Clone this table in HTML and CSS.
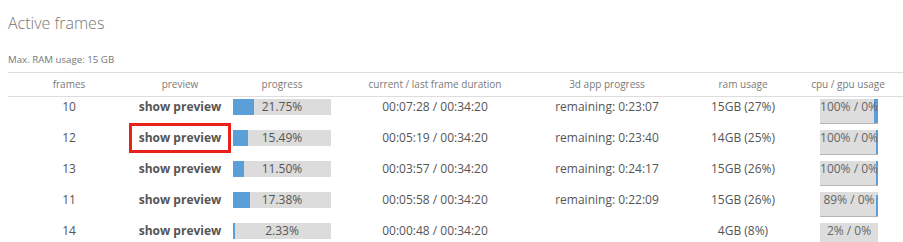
FILE: index.html
```html
<!DOCTYPE html>
<html>
<head>
<meta charset="utf-8">
<link rel="stylesheet" href="styles.css">
</head>
<body>
<div class="page">
  <h1 class="title">Active frames</h1>
  <div class="ram-note">Max. RAM usage: 15 GB</div>
  <div class="table">
    <div class="row head">
      <div class="cell">frames</div>
      <div class="cell">preview</div>
      <div class="cell">progress</div>
      <div class="cell">current / last frame duration</div>
      <div class="cell">3d app progress</div>
      <div class="cell">ram usage</div>
      <div class="cell">cpu / gpu usage</div>
      <div class="cell"></div>
    </div>

    <div class="row">
      <div class="cell">10</div>
      <div class="cell"><span class="preview">show preview</span></div>
      <div class="cell"><div class="bar"><div class="fill" style="width:21.75%"></div><span class="bar-text">21.75%</span></div></div>
      <div class="cell">00:07:28 / 00:34:20</div>
      <div class="cell">remaining: 0:23:07</div>
      <div class="cell">15GB (27%)</div>
      <div class="cell"><div class="cpu"><span class="cpu-text">100% / 0%</span><div class="gpu" style="width:4px;height:100%"></div></div></div>
      <div class="cell"></div>
    </div>

    <div class="row">
      <div class="cell">12</div>
      <div class="cell"><span class="preview marked">show preview</span></div>
      <div class="cell"><div class="bar"><div class="fill" style="width:15.49%"></div><span class="bar-text">15.49%</span></div></div>
      <div class="cell">00:05:19 / 00:34:20</div>
      <div class="cell">remaining: 0:23:40</div>
      <div class="cell">14GB (25%)</div>
      <div class="cell"><div class="cpu"><span class="cpu-text">100% / 0%</span><div class="gpu" style="width:2px;height:100%"></div></div></div>
      <div class="cell"></div>
    </div>

    <div class="row">
      <div class="cell">13</div>
      <div class="cell"><span class="preview">show preview</span></div>
      <div class="cell"><div class="bar"><div class="fill" style="width:11.5%"></div><span class="bar-text">11.50%</span></div></div>
      <div class="cell">00:03:57 / 00:34:20</div>
      <div class="cell">remaining: 0:24:17</div>
      <div class="cell">15GB (26%)</div>
      <div class="cell"><div class="cpu"><span class="cpu-text">100% / 0%</span><div class="gpu" style="width:2px;height:100%"></div></div></div>
      <div class="cell"></div>
    </div>

    <div class="row">
      <div class="cell">11</div>
      <div class="cell"><span class="preview">show preview</span></div>
      <div class="cell"><div class="bar"><div class="fill" style="width:17.38%"></div><span class="bar-text">17.38%</span></div></div>
      <div class="cell">00:05:58 / 00:34:20</div>
      <div class="cell">remaining: 0:22:09</div>
      <div class="cell">15GB (26%)</div>
      <div class="cell"><div class="cpu"><span class="cpu-text">89% / 0%</span><div class="gpu" style="width:2px;height:89%"></div></div></div>
      <div class="cell"></div>
    </div>

    <div class="row">
      <div class="cell">14</div>
      <div class="cell"><span class="preview">show preview</span></div>
      <div class="cell"><div class="bar"><div class="fill" style="width:2.33%"></div><span class="bar-text">2.33%</span></div></div>
      <div class="cell">00:00:48 / 00:34:20</div>
      <div class="cell"></div>
      <div class="cell">4GB (8%)</div>
      <div class="cell"><div class="cpu"><span class="cpu-text">2% / 0%</span></div></div>
      <div class="cell"></div>
    </div>
  </div>
</div>
</body>
</html>
```

FILE: styles.css
```css
html, body {
  margin: 0;
  padding: 0;
  background: #ffffff;
}
body {
  font-family: "Open Sans", "Liberation Sans", sans-serif;
  color: #555555;
  overflow: hidden;
}
.page {
  padding-left: 8px;
}
.title {
  margin: 12px 0 0 0;
  font-size: 16px;
  line-height: 22px;
  font-weight: 300;
  color: #777777;
}
.ram-note {
  margin-top: 20px;
  font-size: 9.7px;
  line-height: 12px;
  color: #777777;
}
.table {
  margin-top: 6px;
  border-top: 1px solid #dddddd;
}
.row {
  display: grid;
  grid-template-columns: 122px 100px 104px 202px 142px 130px 80px 1fr;
  height: 31px;
  align-items: start;
}
.row.head {
  height: 23px;
  border-bottom: 1px solid #dddddd;
  align-items: center;
}
.cell {
  text-align: center;
  font-size: 12px;
  line-height: 16px;
  padding-top: 2px;
  white-space: nowrap;
  display: flex;
  justify-content: center;
}
.row.head .cell {
  font-size: 10px;
  line-height: 23px;
  padding-top: 0;
  color: #7a7a7a;
}
.preview {
  font-weight: 700;
  color: #555555;
  display: inline-block;
}
.preview.marked {
  border: 3px solid #e8221b;
  padding: 4px 7px 4px 7px;
  margin: -7px -10px;
}
.bar {
  width: 98px;
  height: 16px;
  background: #dcdcdc;
  display: flex;
  justify-content: center;
  position: relative;
}
.fill {
  position: absolute;
  left: 0;
  top: 0;
  bottom: 0;
  background: #5b9ed8;
}
.bar-text {
  position: relative;
  color: #555555;
  line-height: 16px;
}
.cpu {
  width: 58px;
  height: 24px;
  background: #dddddd;
  border-bottom: 1px solid #b8b4b4;
  display: flex;
  justify-content: center;
  align-items: flex-start;
  position: relative;
  margin-left: 2px;
}
.cpu-text {
  color: #666666;
  line-height: 16px;
  position: relative;
  z-index: 1;
}
.gpu {
  position: absolute;
  right: 0;
  bottom: 0;
  background: #5b9ed8;
}
```
